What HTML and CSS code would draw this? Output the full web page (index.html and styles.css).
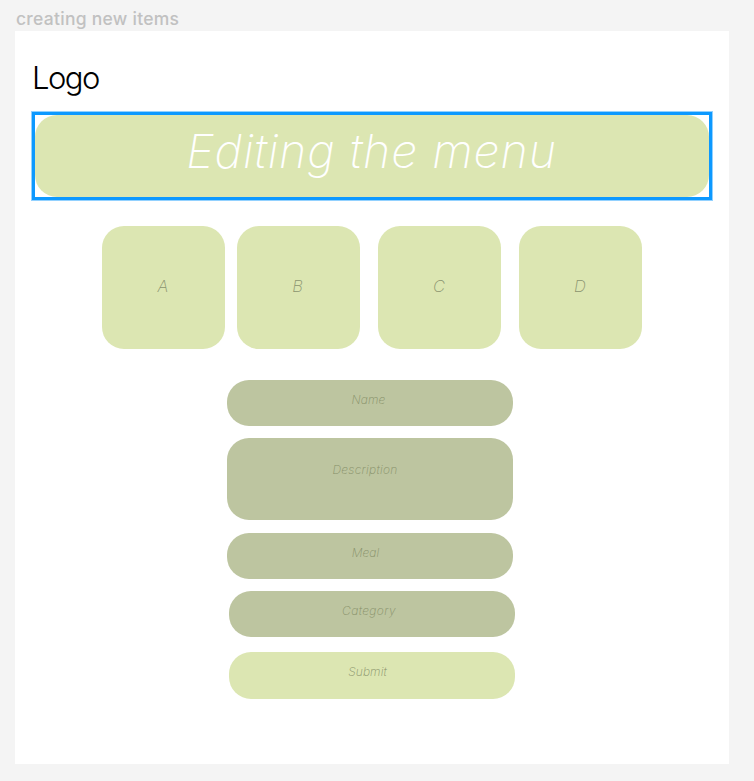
FILE: index.html
```html
<!DOCTYPE html>
<html lang="en">
<head>
<meta charset="utf-8">
<title>creating new items</title>
<link rel="stylesheet" href="styles.css">
</head>
<body>
<div class="frame-label">creating new items</div>
<main class="frame">
  <div class="logo">Logo</div>
  <div class="selection"><h1 class="banner"><span>Editing the menu</span></h1></div>
  <div class="tiles">
    <div class="tile tile-a">A</div>
    <div class="tile tile-b">B</div>
    <div class="tile tile-c">C</div>
    <div class="tile tile-d">D</div>
  </div>
  <form class="form">
    <div class="field name"><span>Name</span></div>
    <div class="field description"><span>Description</span></div>
    <div class="field meal"><span>Meal</span></div>
    <div class="field category"><span>Category</span></div>
    <div class="field submit"><span>Submit</span></div>
  </form>
</main>
</body>
</html>
```
FILE: styles.css
```css
* { box-sizing: border-box; }
body {
  margin: 0;
  height: 781px;
  padding: 8px 0 0 15px;
  overflow: hidden;
  background: #f4f4f4;
  font-family: Inter, sans-serif;
}
.frame-label {
  height: 23px;
  padding-left: 1px;
  font: 500 17.5px/22px Inter, sans-serif;
  letter-spacing: 0.27px;
  color: #c1c1c1;
  white-space: nowrap;
}
.frame {
  width: 713.5px;
  height: 733px;
  padding: 28px 17px 0;
  background: #fff;
}
.logo {
  height: 53px;
  font: 300 31px/38px Inter, sans-serif;
  letter-spacing: -1.5px;
  color: #000;
}
.selection {
  width: 680px;
  height: 88px;
  border: 3px solid #0d99ff;
  box-shadow: 0 0 0 1px rgba(13, 153, 255, 0.45);
}
.banner {
  height: 100%;
  margin: 0;
  padding-right: 1px;
  border-radius: 22px;
  background: #dce6b2;
  color: #fff;
  text-align: center;
  font: italic 200 46.5px/73px Inter, sans-serif;
  letter-spacing: 0.9px;
}
.tiles {
  display: flex;
  margin: 26px 0 0 70px;
}
.tile {
  width: 123px;
  height: 123px;
  border-radius: 22px;
  background: #dce6b2;
  color: #8b946f;
  text-align: center;
  padding-right: 1px;
  font: italic 200 16.5px/120px Inter, sans-serif;
}
.tile-b { margin-left: 11.7px; }
.tile-c { margin-left: 18.3px; }
.tile-d { margin-left: 18px; }
.form {
  width: 288px;
  margin: 30.5px 0 0 195px;
}
.field {
  width: 286px;
  height: 46.5px;
  border-radius: 22px;
  background: #bdc5a0;
  color: #879069;
  text-align: center;
  font: italic 200 12px/39px Inter, sans-serif;
  letter-spacing: 0.1px;
}
.name { padding-right: 3px; }
.description { height: 82.5px; margin-top: 11.5px; padding-right: 10px; line-height: 64px; letter-spacing: 0.3px; }
.meal { margin-top: 12.5px; padding-right: 9px; }
.category { margin: 11.5px 0 0 2px; padding-right: 6px; letter-spacing: 0.4px; }
.submit { margin: 15px 0 0 2px; padding-right: 9px; background: #dce6b2; }
```
